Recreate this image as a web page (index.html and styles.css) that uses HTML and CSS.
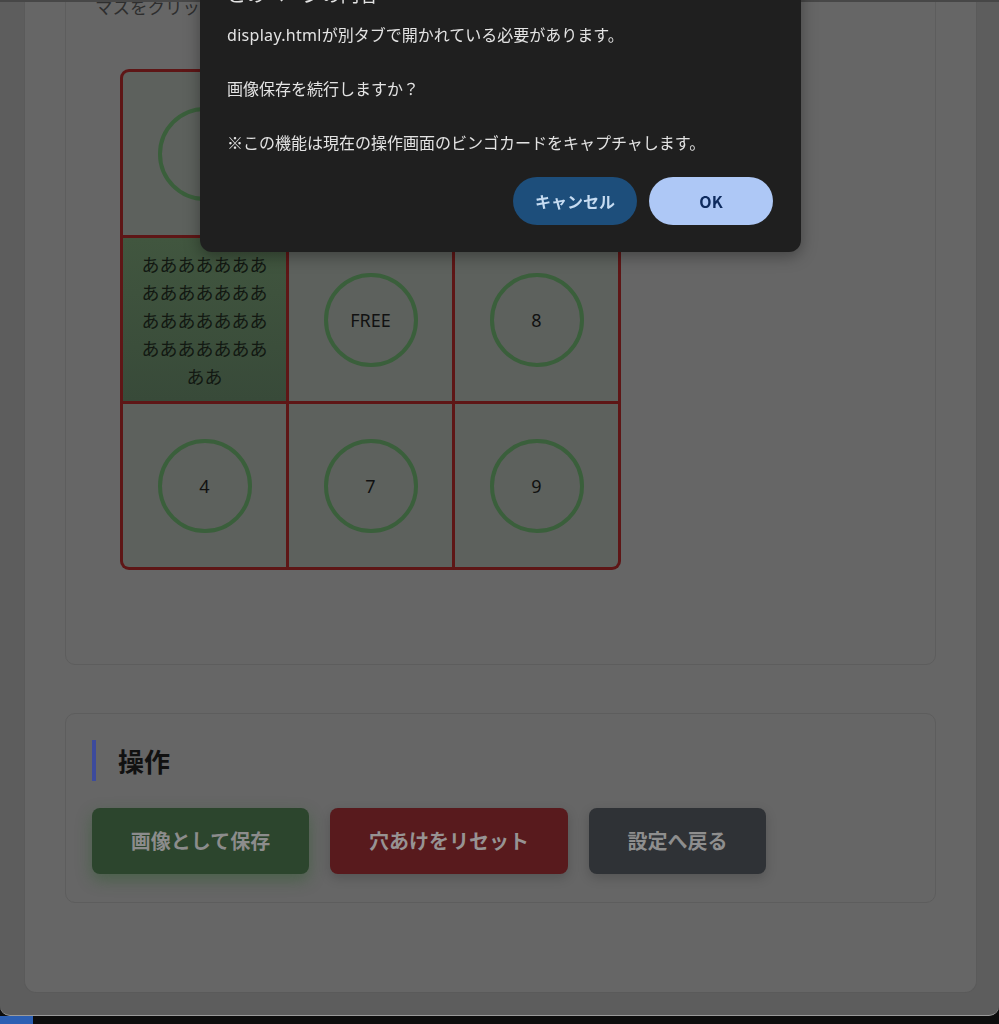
FILE: index.html
```html
<!DOCTYPE html>
<html lang="ja">
<head>
<meta charset="utf-8">
<title>ビンゴ操作</title>
<link rel="stylesheet" href="styles.css">
</head>
<body>
<div class="window">
  <div class="container">
    <section class="card card-board">
      <p class="hint">マスをクリックして穴をあけてください。</p>
      <div class="board">
        <div class="cell"><span class="ring">5</span></div>
        <div class="cell"><span class="ring">2</span></div>
        <div class="cell"><span class="ring">6</span></div>
        <div class="cell cell-marked"><span class="cell-text">ああああああああああああああああああああああああああああああ</span></div>
        <div class="cell"><span class="ring">FREE</span></div>
        <div class="cell"><span class="ring">8</span></div>
        <div class="cell"><span class="ring">4</span></div>
        <div class="cell"><span class="ring">7</span></div>
        <div class="cell"><span class="ring">9</span></div>
      </div>
    </section>
    <section class="card card-actions">
      <h2 class="section-title">操作</h2>
      <div class="actions">
        <button class="btn btn-save">画像として保存</button>
        <button class="btn btn-reset">穴あけをリセット</button>
        <button class="btn btn-back">設定へ戻る</button>
      </div>
    </section>
  </div>
</div>
<div class="taskbar"><span class="taskbar-app"></span></div>

<div class="dialog">
  <div class="dialog-title">このページの内容</div>
  <div class="dialog-body">
    <p><span class="latin">display.html</span>が別タブで開かれている必要があります。</p>
    <p>画像保存を続行しますか？</p>
    <p>※この機能は現在の操作画面のビンゴカードをキャプチャします。</p>
  </div>
  <div class="dialog-actions">
    <button class="dbtn dbtn-cancel">キャンセル</button>
    <button class="dbtn dbtn-ok">OK</button>
  </div>
</div>
</body>
</html>
```

FILE: styles.css
```css
* { box-sizing: border-box; }

html, body {
  margin: 0;
  padding: 0;
}

body {
  background: #0d0d0d;
  font-family: "Noto Sans", "Noto Sans CJK JP", sans-serif;
  overflow: hidden;
  height: 1024px;
}

.window {
  height: 1016px;
  background: #5d5d5d;
  border-top: 2px solid #474747;
  border-bottom: 1px solid #9a9a9a;
  border-radius: 0 0 10px 10px;
  overflow: hidden;
}

.container {
  display: flow-root;
  margin: 0 22px 0 24px;
  background: #666666;
  border-left: 1px solid #5a5a5a;
  border-right: 1px solid #5a5a5a;
  border-bottom: 1px solid #5a5a5a;
  border-radius: 0 0 12px 12px;
  padding: 0 40px 89px 40px;
}

.card {
  border: 1px solid #5d5d5d;
  border-radius: 10px;
  padding: 26px;
}

.card-board {
  margin-top: -35px;
}

.hint {
  margin: 0 0 48px 3px;
  font-size: 17.5px;
  line-height: 27px;
  color: #2e2e2e;
}

.board {
  display: grid;
  grid-template-columns: repeat(3, 163px);
  grid-auto-rows: 163px;
  gap: 3px;
  width: 501px;
  padding: 3px;
  margin: 0 0 68px 28px;
  background: #5e1616;
  border-radius: 9px;
  overflow: hidden;
}

.cell {
  display: flex;
  align-items: center;
  justify-content: center;
  background: #5d615d;
  padding: 0 12px;
  color: #111111;
  font-size: 18px;
}

.cell:nth-child(7) { border-bottom-left-radius: 6px; }
.cell:nth-child(9) { border-bottom-right-radius: 6px; }
.cell:nth-child(1) { border-top-left-radius: 6px; }
.cell:nth-child(3) { border-top-right-radius: 6px; }

.ring {
  display: flex;
  align-items: center;
  justify-content: center;
  width: 94px;
  height: 94px;
  border: 4px solid #3a5f3b;
  border-radius: 50%;
  font-size: 18px;
}

.cell-marked {
  background: linear-gradient(#41563f, #384a39);
  text-align: center;
}

.cell-text {
  font-family: "Noto Sans CJK JP", sans-serif;
  font-size: 18px;
  line-height: 28px;
  color: #121812;
  word-break: break-all;
}

.card-actions {
  margin-top: 48px;
  padding-bottom: 28px;
}

.section-title {
  margin: 0;
  border-left: 4px solid #3d4b9c;
  padding-left: 22px;
  font-family: "Noto Sans CJK JP", sans-serif;
  font-size: 26px;
  font-weight: 700;
  line-height: 41px;
  color: #111111;
}

.actions {
  display: flex;
  gap: 21px;
  margin-top: 27px;
}

.btn {
  border: 0;
  border-radius: 8px;
  padding: 20px 38px;
  font-family: "Noto Sans CJK JP", sans-serif;
  font-size: 20px;
  font-weight: 700;
  line-height: 26px;
  color: #8c8c8c;
}

.btn-save {
  background: #2c452d;
  width: 217px;
  box-shadow: 0 6px 16px rgba(40, 90, 40, 0.45);
}

.btn-reset {
  background: #581a1d;
  width: 238px;
  color: #979393;
  box-shadow: 0 4px 12px rgba(0, 0, 0, 0.18);
}

.btn-back {
  background: #2f3236;
  width: 177px;
  color: #8e8e8e;
  box-shadow: 0 4px 12px rgba(0, 0, 0, 0.18);
}

.taskbar {
  height: 8px;
  display: flex;
}

.taskbar-app {
  width: 33px;
  background: #2c5fb3;
}

.dialog {
  position: fixed;
  top: -43px;
  left: 200px;
  width: 601px;
  background: #1f1f1f;
  border-radius: 12px;
  padding: 24px 28px 27px 27px;
  color: #e3e3e3;
  font-family: "Noto Sans CJK JP", sans-serif;
  box-shadow: 0 4px 16px rgba(0, 0, 0, 0.35);
}

.dialog-title {
  font-size: 19px;
  line-height: 26px;
  margin-bottom: 14px;
}

.dialog-body p {
  margin: 0 0 27px 0;
  height: 27px;
  font-size: 16px;
  line-height: 27px;
}

.dialog-body .latin {
  font-family: "Noto Sans", sans-serif;
  letter-spacing: 0.3px;
  line-height: 16px;
}

.dialog-body p:last-child {
  margin-bottom: 0;
}

.dialog-actions {
  display: flex;
  justify-content: flex-end;
  gap: 12px;
  margin-top: 21px;
}

.dbtn {
  width: 124px;
  height: 48px;
  border: 0;
  border-radius: 24px;
  font-family: "Noto Sans CJK JP", sans-serif;
  font-size: 16px;
  font-weight: 700;
}

.dbtn-cancel {
  background: #1d4e7b;
  color: #c6dcf2;
}

.dbtn-ok {
  background: #aec8f6;
  color: #0e2b5e;
}
```
